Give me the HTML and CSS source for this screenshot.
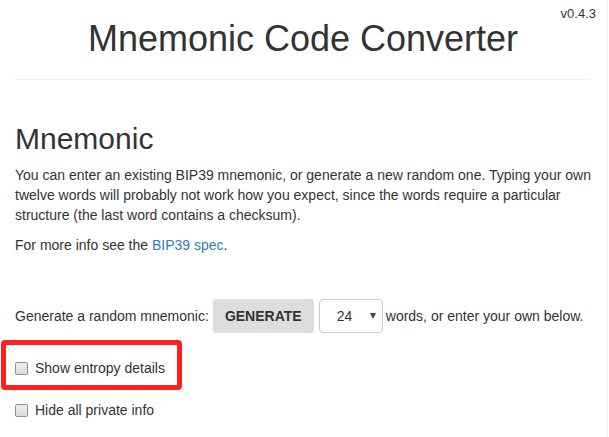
FILE: index.html
```html
<!DOCTYPE html>
<html lang="en">
<head>
<meta charset="utf-8">
<title>Mnemonic Code Converter</title>
<link rel="stylesheet" href="styles.css">
</head>
<body>
<div class="page">
  <span class="version">v0.4.3</span>
  <div class="container">
    <h1 class="title">Mnemonic Code Converter</h1>
    <hr class="rule">
    <h2 class="section-title">Mnemonic</h2>
    <p class="text">You can enter an existing BIP39 mnemonic, or generate a new random one. Typing your own twelve words will probably not work how you expect, since the words require a particular structure (the last word contains a checksum).</p>
    <p class="text">For more info see the <a class="link" href="#">BIP39 spec</a>.</p>
    <div class="generate-row">
      <span class="gen-label">Generate a random mnemonic:</span>
      <button class="btn-generate" type="button">GENERATE</button>
      <div class="select-wrap">
        <select class="strength">
          <option>24</option>
        </select>
        <span class="select-arrow"></span>
      </div>
      <span class="gen-after">words, or enter your own below.</span>
    </div>
    <div class="check-row check-first">
      <label class="check-label"><input type="checkbox" class="check"><span>Show entropy details</span></label>
      <div class="highlight"></div>
    </div>
    <div class="check-row check-second">
      <label class="check-label"><input type="checkbox" class="check"><span>Hide all private info</span></label>
    </div>
  </div>
</div>
</body>
</html>
```

FILE: styles.css
```css
html, body {
  margin: 0;
  padding: 0;
  background: #fff;
}
body {
  font-family: "Liberation Sans", Arial, sans-serif;
  font-size: 14px;
  line-height: 20px;
  color: #333;
  overflow: hidden;
}
.page {
  position: relative;
  width: 607px;
  min-height: 437px;
  border-right: 1px solid #eee;
}
.version {
  position: absolute;
  top: 5px;
  right: 11px;
  font-size: 13px;
  line-height: 18px;
  color: #333;
}
.container {
  padding: 1px 16px 0 15px;
}
.title {
  margin: 18px 0 10px;
  font-size: 36px;
  font-weight: 400;
  line-height: 39.6px;
  text-align: center;
  color: #333;
}
.rule {
  margin: 20px 0 0;
  border: 0;
  border-top: 1px solid #eee;
  height: 0;
}
.section-title {
  margin: 42px 0 10px;
  font-size: 30px;
  font-weight: 400;
  line-height: 33px;
  color: #333;
}
.text {
  margin: 0 0 10px;
}
.link {
  color: #337ab7;
  text-decoration: none;
}
.generate-row {
  display: flex;
  align-items: center;
  margin-top: 44px;
  height: 34px;
}
.gen-label {
  margin-right: 4px;
}
.btn-generate {
  font-family: "Liberation Sans", Arial, sans-serif;
  font-size: 14px;
  font-weight: 700;
  line-height: 20px;
  color: #333;
  background: #dddddd;
  border: 1px solid #dddddd;
  border-radius: 3px;
  padding: 6px 11px;
  height: 34px;
  width: 101px;
}
.select-wrap {
  position: relative;
  margin-left: 5px;
  margin-right: 3px;
}
.strength {
  appearance: none;
  -webkit-appearance: none;
  display: block;
  width: 64px;
  height: 34px;
  padding: 0 0 0 17px;
  font-family: "Liberation Sans", Arial, sans-serif;
  font-size: 14px;
  color: #333;
  background: #fff;
  border: 1px solid #ccc;
  border-radius: 4px;
}
.select-arrow {
  position: absolute;
  top: 14px;
  right: 7px;
  width: 0;
  height: 0;
  border-left: 3.5px solid transparent;
  border-right: 3.5px solid transparent;
  border-top: 6px solid #444;
  pointer-events: none;
}
.check-row {
  position: relative;
  height: 20px;
}
.check-first {
  margin-top: 25px;
}
.check-second {
  margin-top: 22px;
}
.check-label {
  display: flex;
  align-items: flex-start;
  line-height: 20px;
}
.check {
  appearance: none;
  -webkit-appearance: none;
  width: 13px;
  height: 13px;
  margin: 4px 7px 0 0;
  box-sizing: border-box;
  border: 1px solid #8f8f8f;
  border-radius: 2px;
  background: linear-gradient(#eeeeee, #dcdcdc);
}
.highlight {
  position: absolute;
  left: -14px;
  top: -18px;
  width: 171px;
  height: 40px;
  border: 5px solid #ff1f1f;
  border-radius: 4px;
  pointer-events: none;
}
```
